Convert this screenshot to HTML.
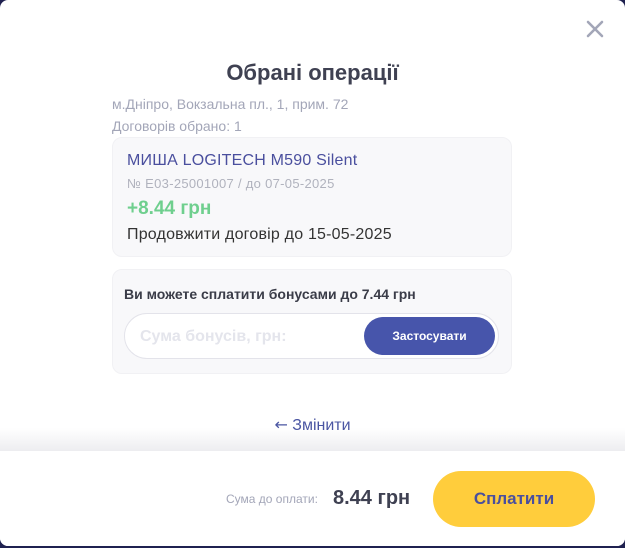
<!DOCTYPE html>
<html><head><meta charset="utf-8"><style>
*{margin:0;padding:0;box-sizing:border-box}
body{width:625px;height:548px;background:#1f2150;font-family:"Liberation Sans","DejaVu Sans",sans-serif;overflow:hidden;position:relative}
.modal{position:absolute;left:0;top:0;width:625px;height:546px;background:#fff;border-radius:8px;overflow:hidden}
.abs{position:absolute;white-space:nowrap}
.card{position:absolute;left:112px;width:400px;background:#f8f8fa;border-radius:10px;border:1px solid #f1f1f4}
.fade{position:absolute;left:0;top:428px;width:625px;height:23px;background:linear-gradient(rgba(255,255,255,0),#ededf0)}
.footer{position:absolute;left:0;top:451px;width:625px;height:95px;background:#fff}
</style></head><body>
<div class="modal">
<svg class="abs" style="left:586px;top:20px" width="18" height="18" viewBox="0 0 18 18"><path d="M2 2L16 16M16 2L2 16" stroke="#a3a6b8" stroke-width="2.6" stroke-linecap="round"/></svg>
<div class="abs" style="left:0;width:625px;text-align:center;top:60px;font-size:22px;font-weight:bold;color:#3f4152">Обрані операції</div>
<div class="abs" style="left:112px;top:96px;font-size:14px;color:#a3a6b8">м.Дніпро, Вокзальна пл., 1, прим. 72</div>
<div class="abs" style="left:112px;top:118px;font-size:14px;color:#a3a6b8">Договорів обрано: 1</div>
<div class="card" style="top:137px;height:120px"></div>
<div class="abs" style="left:127px;top:152px;font-size:16px;color:#4a4f9e;letter-spacing:0.2px">МИША LOGITECH M590 Silent</div>
<div class="abs" style="left:127px;top:176px;font-size:13px;color:#b0b2bd;letter-spacing:0.3px">№ E03-25001007 / до 07-05-2025</div>
<div class="abs" style="left:127px;top:198px;font-size:19px;font-weight:bold;color:#6fcf8e">+8.44 грн</div>
<div class="abs" style="left:127px;top:226px;font-size:16px;color:#333;letter-spacing:0.2px">Продовжити договір до 15-05-2025</div>
<div class="card" style="top:269px;height:105px"></div>
<div class="abs" style="left:124px;top:286px;font-size:14px;font-weight:bold;color:#3a3c48">Ви можете сплатити бонусами до 7.44 грн</div>
<div class="abs" style="left:124px;top:313px;width:375px;height:46px;border-radius:23px;background:#fff;border:1px solid #e3e3ea"></div>
<div class="abs" style="left:140px;top:328px;font-size:16px;font-weight:bold;color:#e4e5ec">Сума бонусів, грн:</div>
<div class="abs" style="left:364px;top:317px;width:131px;height:38px;border-radius:19px;background:#4755ab;color:#fff;font-size:12px;font-weight:bold;text-align:center;line-height:38px">Застосувати</div>
<div class="fade"></div>
<div class="abs" style="left:0;width:625px;text-align:center;top:415px;height:20px;line-height:20px;font-size:16px;color:#4a55a2;z-index:2"><span style="font-family:'DejaVu Sans',sans-serif;font-size:16px;line-height:20px">←</span> Змінити</div>
<div class="footer"></div>
<div class="abs" style="left:226px;top:492px;font-size:12px;color:#a3a6b8">Сума до оплати:</div>
<div class="abs" style="left:333px;top:487px;font-size:20px;font-weight:bold;color:#3f4152">8.44 грн</div>
<div class="abs" style="left:433px;top:471px;width:162px;height:56px;border-radius:28px;background:#ffcd3c;color:#4a4f9e;font-size:17px;font-weight:bold;text-align:center;line-height:56px">Сплатити</div>
</div>
</body></html>
